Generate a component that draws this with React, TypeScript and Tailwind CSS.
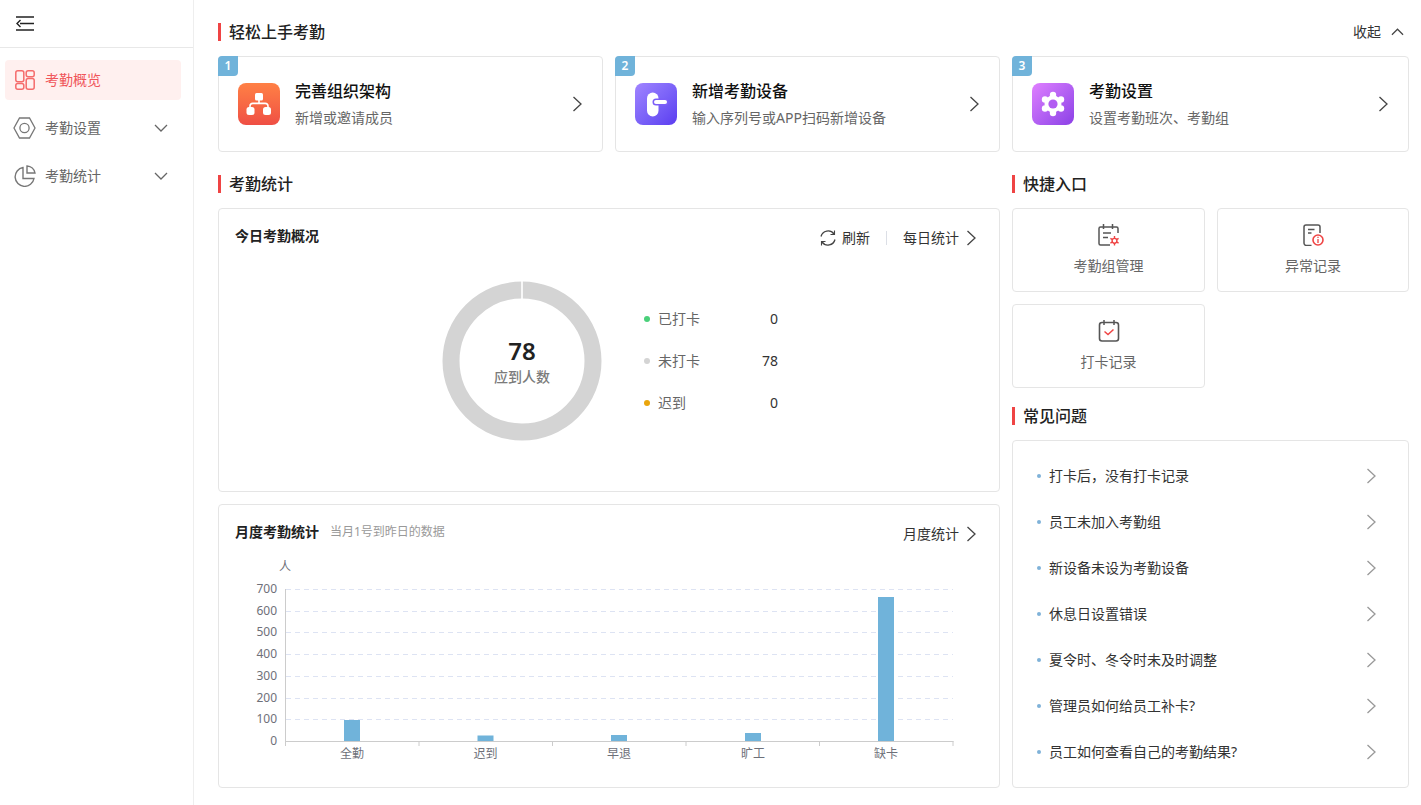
import React from 'react';

const Chevron: React.FC<{ className?: string }> = ({ className = 'w-[10px] h-[16px] text-[#444]' }) => (
  <svg viewBox="0 0 10 16" fill="none" className={className}>
    <path d="M1.5 1l7.5 7-7.5 7" stroke="currentColor" strokeWidth="1.3" />
  </svg>
);

const Down: React.FC = () => (
  <svg viewBox="0 0 14 8" fill="none" className="w-[14px] h-[8px] text-[#666]">
    <path d="M1 1l6 6 6-6" stroke="currentColor" strokeWidth="1.3" />
  </svg>
);

const SectionTitle: React.FC<{ title: string; children?: React.ReactNode }> = ({ title, children }) => (
  <div className="flex items-center justify-between h-6">
    <div className="flex items-center gap-2">
      <span className="w-[3px] h-[18px] bg-[#ef4444]" />
      <h2 className="text-base font-medium text-[#222]">{title}</h2>
    </div>
    {children}
  </div>
);

const steps = [
  {
    title: '完善组织架构',
    sub: '新增或邀请成员',
    bg: 'bg-gradient-to-b from-[#ff8045] to-[#ef4e44]',
    icon: (
      <svg viewBox="0 0 42 42" fill="white" className="w-[42px] h-[42px]">
        <rect x="17" y="10" width="8" height="7.5" rx="1.5" />
        <path d="M20.2 17h1.6v2.6h5.4c2.2 0 3.6 1.4 3.6 3.6v2h-1.6v-2c0-1.2-.8-2-2-2H14.8c-1.2 0-2 .8-2 2v2h-1.6v-2c0-2.2 1.4-3.6 3.6-3.6h5.4z" />
        <rect x="8.5" y="24" width="8" height="8" rx="2.5" />
        <rect x="25" y="24" width="8" height="8" rx="2.5" />
      </svg>
    ),
  },
  {
    title: '新增考勤设备',
    sub: '输入序列号或APP扫码新增设备',
    bg: 'bg-gradient-to-br from-[#a184ff] to-[#5c3bf0]',
    icon: (
      <svg viewBox="0 0 42 42" className="w-[42px] h-[42px]">
        <rect x="12" y="9.5" width="11.5" height="24" rx="5.75" fill="white" />
        <rect x="17.5" y="15.5" width="16" height="7" rx="3.5" fill="#7c5ef8" />
        <rect x="19" y="17" width="13" height="4" rx="2" fill="white" />
      </svg>
    ),
  },
  {
    title: '考勤设置',
    sub: '设置考勤班次、考勤组',
    bg: 'bg-gradient-to-br from-[#e07fff] to-[#8c3fe6]',
    icon: (
      <svg viewBox="0 0 42 42" fill="white" className="w-[42px] h-[42px]">
        <circle cx="21" cy="21" r="8.5" />
        <circle cx="21" cy="12" r="3.2" />
        <circle cx="21" cy="30" r="3.2" />
        <circle cx="13" cy="16.5" r="3.2" />
        <circle cx="29" cy="16.5" r="3.2" />
        <circle cx="13" cy="25.5" r="3.2" />
        <circle cx="29" cy="25.5" r="3.2" />
        <circle cx="21" cy="21" r="4.6" fill="#b25cf2" />
      </svg>
    ),
  },
];

const faqs = [
  '打卡后，没有打卡记录',
  '员工未加入考勤组',
  '新设备未设为考勤设备',
  '休息日设置错误',
  '夏令时、冬令时未及时调整',
  '管理员如何给员工补卡?',
  '员工如何查看自己的考勤结果?',
];

const legend = [
  { label: '已打卡', value: 0, dot: 'bg-[#4ad07a]' },
  { label: '未打卡', value: 78, dot: 'bg-[#d4d4d4]' },
  { label: '迟到', value: 0, dot: 'bg-[#eaa50c]' },
];

const bars = [
  { label: '全勤', x: 352, top: 720 },
  { label: '迟到', x: 485.5, top: 735.5 },
  { label: '早退', x: 619, top: 735 },
  { label: '旷工', x: 753, top: 733 },
  { label: '缺卡', x: 886, top: 597 },
];

const ticks = [700, 600, 500, 400, 300, 200, 100, 0];

const Watermark: React.FC = () => (
  <div aria-hidden className="absolute inset-0 overflow-hidden pointer-events-none">
    <div className="grid grid-cols-[repeat(9,170px)] gap-y-[70px] w-[1600px] -rotate-45 origin-center mt-[-300px] ml-[-100px]">
      {Array.from({ length: 90 }).map((_, i) => (
        <span key={i} className="text-[24px] text-[#00000005]">119535</span>
      ))}
    </div>
  </div>
);

const Quick: React.FC<{ label: string; children: React.ReactNode }> = ({ label, children }) => (
  <div className="h-[84px] border border-[#e5e5e5] rounded flex flex-col items-center pt-[15px]">
    <svg viewBox="0 0 22 22" fill="none" className="w-[22px] h-[22px]">{children}</svg>
    <span className="mt-[10px] text-sm text-[#666]">{label}</span>
  </div>
);

export default function App() {
  return (
    <div className="relative flex h-screen overflow-hidden bg-white font-['Noto_Sans','Noto_Sans_CJK_SC',sans-serif]">
      {/* Sidebar */}
      <aside className="w-[194px] shrink-0 border-r border-[#eeeeee]">
        <div className="h-[48px] border-b border-[#e8e8e8] flex items-center pl-4">
          <svg viewBox="0 0 18 15" fill="none" className="w-[18px] h-[15px] text-[#222]">
            <path d="M0 1h18M4 7.5h14M0 14h18" stroke="currentColor" strokeWidth="1.4" />
            <path d="M4.5 4L1 7.5 4.5 11" stroke="currentColor" strokeWidth="1.4" />
          </svg>
        </div>
        <nav className="pt-3 pl-[5px] pr-3 flex flex-col gap-2 text-sm">
          <div className="h-10 rounded bg-[#fff0ef] flex items-center pl-[10px] gap-[10px] text-[#f0555a]">
            <svg viewBox="0 0 20 20" fill="none" stroke="#f56c6c" strokeWidth="1.5" className="w-5 h-5">
              <rect x="0.8" y="0.8" width="8" height="11" rx="2" />
              <rect x="0.8" y="13.6" width="8" height="5.6" rx="2" />
              <rect x="11.2" y="0.8" width="8" height="6" rx="2" />
              <rect x="11.2" y="8.6" width="8" height="10.6" rx="2" />
            </svg>
            考勤概览
          </div>
          <div className="h-10 flex items-center pl-[8px] pr-[13px] text-[#666]">
            <svg viewBox="0 0 23 22" fill="none" stroke="#777" strokeWidth="1.3" className="w-[23px] h-[22px]">
              <path d="M6.5 1h10l5.5 10-5.5 10h-10L1 11z" />
              <circle cx="11.5" cy="11" r="4.6" />
            </svg>
            <span className="ml-[9px] flex-1">考勤设置</span>
            <Down />
          </div>
          <div className="h-10 flex items-center pl-[8px] pr-[13px] text-[#666]">
            <svg viewBox="0 0 23 22" fill="none" stroke="#777" strokeWidth="1.4" className="w-[23px] h-[22px]">
              <path d="M10 2.5a9.5 9.5 0 1 0 11 11H10z" />
              <path d="M14 1v7h8A8.5 8.5 0 0 0 14 1z" />
            </svg>
            <span className="ml-[9px] flex-1">考勤统计</span>
            <Down />
          </div>
        </nav>
      </aside>

      {/* Main */}
      <main className="flex-1 pt-5 pl-6 pr-3">
        <SectionTitle title="轻松上手考勤">
          <div className="flex items-center gap-[10px] pr-[5px] text-sm text-[#333]">
            收起
            <svg viewBox="0 0 14 8" fill="none" className="w-[13px] h-[8px] text-[#444]">
              <path d="M1 7l6-6 6 6" stroke="currentColor" strokeWidth="1.3" />
            </svg>
          </div>
        </SectionTitle>

        <div className="grid grid-cols-[385px_385px_397px] gap-3 mt-3">
          {steps.map((s, i) => (
            <div key={s.title} className="relative h-24 border border-[#e5e5e5] rounded flex items-center pl-[19px] pr-[20px]">
              <span className="absolute -left-px -top-px w-5 h-5 bg-[#70b3da] rounded-tl rounded-br text-white text-xs font-semibold flex items-center justify-center">
                {i + 1}
              </span>
              <div className={`w-[42px] h-[42px] rounded-lg ${s.bg}`}>{s.icon}</div>
              <div className="ml-[15px] flex-1 -mt-[2px]">
                <div className="text-base font-medium text-[#111] leading-6">{s.title}</div>
                <div className="text-sm text-[#666] leading-5 mt-[5px]">{s.sub}</div>
              </div>
              <Chevron />
            </div>
          ))}
        </div>

        <div className="grid grid-cols-[782px_397px] gap-3 mt-5">
          {/* Left column */}
          <div>
            <SectionTitle title="考勤统计" />
            <div className="mt-3 h-[284px] border border-[#e5e5e5] rounded">
              <div className="flex items-center justify-between pl-4 pr-[23px] pt-[19px]">
                <span className="text-sm font-bold text-[#222] -mt-1">今日考勤概况</span>
                <div className="flex items-center text-sm text-[#333]">
                  <svg viewBox="0 0 18 18" fill="none" stroke="#444" strokeWidth="1.3" className="w-[18px] h-[18px] mr-[5px]">
                    <path d="M2 7.5A7.3 7.3 0 0 1 15 5M16 10.5A7.3 7.3 0 0 1 3 13" />
                    <path d="M15.5 1.5V5.5H11.5M2.5 16.5V12.5H6.5" strokeWidth="1.1" />
                  </svg>
                  刷新
                  <span className="w-px h-[14px] bg-[#dcdfe6] mx-4" />
                  每日统计
                  <Chevron className="w-[10px] h-[16px] text-[#444] ml-[7px]" />
                </div>
              </div>
              <div className="flex items-center pl-[223px] mt-[33px]">
                <div className="relative w-[160px] h-[160px]">
                  <svg viewBox="0 0 160 160" fill="none" className="w-[160px] h-[160px]">
                    <circle cx="80" cy="80" r="71" stroke="#d4d4d4" strokeWidth="17" />
                    <rect x="79.2" y="0" width="1.6" height="18" fill="white" />
                  </svg>
                  <div className="absolute inset-0 flex flex-col items-center justify-center">
                    <span className="text-2xl font-semibold text-[#222] leading-8 -mt-[1px]">78</span>
                    <span className="text-sm font-medium text-[#7b7b7b] leading-5">应到人数</span>
                  </div>
                </div>
                <div className="ml-[42px] w-[134px] flex flex-col gap-[22px]">
                  {legend.map((l) => (
                    <div key={l.label} className="h-5 flex items-center text-sm text-[#666]">
                      <span className={`w-[6px] h-[6px] rounded-full ${l.dot}`} />
                      <span className="ml-2 flex-1">{l.label}</span>
                      <span className="text-[#333]">{l.value}</span>
                    </div>
                  ))}
                </div>
              </div>
            </div>

            <div className="mt-3 h-[284px] border border-[#e5e5e5] rounded">
              <div className="flex justify-between pl-4 pr-[23px] pt-[17px] h-[50px]">
                <div className="flex items-center h-5">
                  <span className="text-sm font-bold text-[#222]">月度考勤统计</span>
                  <span className="ml-[11px] text-xs text-[#999]">当月1号到昨日的数据</span>
                </div>
                <div className="flex items-center h-5 mt-[2px] text-sm text-[#333]">
                  月度统计
                  <Chevron className="w-[10px] h-[16px] text-[#444] ml-[7px]" />
                </div>
              </div>
              <svg viewBox="219 555 780 232" width="780" height="232" className="block">
                <text x="285" y="571" fontSize="12" textAnchor="middle" fill="#6e7079">人</text>
                {ticks.map((t, i) => {
                  const y = Math.round(589 + i * 21.7) + 0.5;
                  return (
                    <g key={t}>
                      {t !== 0 && <line x1="286" x2="953" y1={y} y2={y} stroke="#dde3f3" strokeDasharray="5 4" />}
                      <text x="277" y={y + 3} fontSize="12" textAnchor="end" fill="#6e7079">{t}</text>
                    </g>
                  );
                })}
                <line x1="285.5" x2="285.5" y1="589" y2="746" stroke="#ccc" />
                <line x1="285" x2="953.5" y1="741.5" y2="741.5" stroke="#ccc" />
                {[0, 1, 2, 3, 4, 5].map((i) => (
                  <line key={i} x1={285.5 + i * 133.5} x2={285.5 + i * 133.5} y1="741" y2="746" stroke="#ccc" />
                ))}
                {bars.map((b) => (
                  <g key={b.label}>
                    <rect x={b.x - 8} y={b.top} width="16" height={741 - b.top} fill="#70b3da" />
                    <text x={b.x} y="758" fontSize="12" textAnchor="middle" fill="#6e7079">{b.label}</text>
                  </g>
                ))}
              </svg>
            </div>
          </div>

          {/* Right column */}
          <div>
            <SectionTitle title="快捷入口" />
            <div className="grid grid-cols-[193px_192px] gap-3 mt-3">
              <Quick label="考勤组管理">
                <path d="M20 9V4.5A1.5 1.5 0 0 0 18.500 3h-16A1.5 1.5 0 0 0 1 4.500v15A1.500 1.500 0 0 0 2.500 21H12" stroke="#555" strokeWidth="1.5" />
                <path d="M5.500 0v5M14.500 0v5M5 9h8M5 13.500h5" stroke="#555" strokeWidth="1.500" />
                <path d="M16.500 12v9.500M12.400 14.400l8.200 4.800M20.600 14.400l-8.200 4.800" stroke="#ef4444" strokeWidth="1.400" />
                <circle cx="16.500" cy="16.800" r="2.400" fill="white" stroke="#ef4444" strokeWidth="1.400" />
              </Quick>
              <Quick label="异常记录">
                <path d="M18 9V3A2 2 0 0 0 16 1H4A2 2 0 0 0 2 3v16A2.500 2.500 0 0 0 4.500 21.500h5" stroke="#555" strokeWidth="1.500" />
                <path d="M6 5.500h6.500M6 9h3.500" stroke="#555" strokeWidth="1.500" />
                <circle cx="16" cy="16" r="5" fill="white" stroke="#ef4444" strokeWidth="1.600" />
                <path d="M16 15v4M16 12.800v1.200" stroke="#ef4444" strokeWidth="1.300" />
              </Quick>
              <Quick label="打卡记录">
                <rect x="1.500" y="2.500" width="19" height="18.500" rx="2.500" stroke="#555" strokeWidth="1.600" />
                <path d="M6 0v5M16 0v5" stroke="#555" strokeWidth="1.500" />
                <path d="M6.500 11.500l3.500 3 5.500-5" stroke="#ef4444" strokeWidth="1.500" />
              </Quick>
            </div>

            <div className="mt-4">
              <SectionTitle title="常见问题" />
            </div>
            <div className="mt-3 h-[348px] border border-[#e5e5e5] rounded pt-[12px] pl-[24px] pr-[32px]">
              {faqs.map((q) => (
                <div key={q} className="h-[46px] flex items-center text-sm text-[#333]">
                  <span className="w-1 h-1 rounded-full bg-[#7fb2d8]" />
                  <span className="ml-[8px] flex-1">{q}</span>
                  <Chevron className="w-[10px] h-[16px] text-[#999]" />
                </div>
              ))}
            </div>
          </div>
        </div>
      </main>
      <Watermark />
    </div>
  );
}
